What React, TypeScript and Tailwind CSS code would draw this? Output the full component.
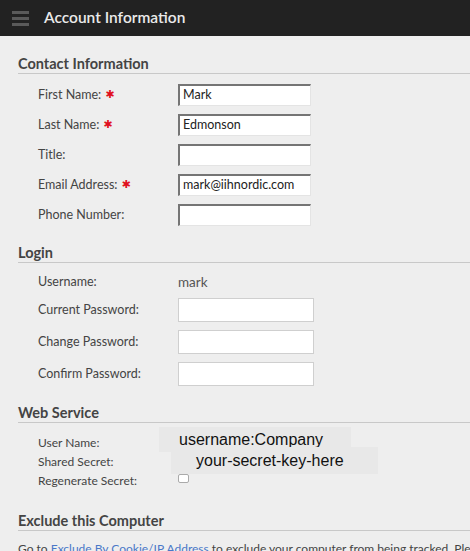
const font = { fontFamily: "Lato, 'Open Sans', sans-serif" };
const pasted = { fontFamily: "'Liberation Sans', Arial, sans-serif" };

function SectionHeader({ title }: { title: string }) {
  return (
    <div className="ml-[18px] border-b border-[#c8c8c8]">
      <h2 className="text-[14.5px] font-bold leading-[18px] text-[#444]">{title}</h2>
    </div>
  );
}

function Required() {
  return (
    <span
      className="relative top-[-1px] ml-[4px] text-[11px] leading-none text-[#e0101e]"
      style={{ fontFamily: "'DejaVu Sans', sans-serif" }}
    >
      ✱
    </span>
  );
}

function InsetInput({ value }: { value?: string }) {
  return (
    <div className="flex h-[22px] w-[133px] items-center border-t-2 border-l-2 border-b border-r border-t-[#757575] border-l-[#757575] border-b-[#e4e4e4] border-r-[#e4e4e4] bg-white px-[3px] text-[12.5px] text-[#222]">
      {value}
    </div>
  );
}

function PlainInput() {
  return <div className="h-[24px] w-[136px] border border-[#cfcfcf] bg-white" />;
}

const contactRows = [
  { label: "First Name:", required: true, value: "Mark" },
  { label: "Last Name:", required: true, value: "Edmonson" },
  { label: "Title:", required: false, value: "" },
  { label: "Email Address:", required: true, value: "mark@iihnordic.com" },
  { label: "Phone Number:", required: false, value: "" },
];

const passwordRows = ["Current Password:", "Change Password:", "Confirm Password:"];

export default function App() {
  return (
    <div className="min-h-[700px] w-[470px] overflow-hidden bg-[#eeeeee] text-[#444]" style={font}>
      {/* Top bar */}
      <div className="flex h-[36px] items-center bg-[#222222]">
        <div className="ml-[12px] flex w-[17px] flex-col gap-[3px]">
          <span className="h-[3px] bg-[#5a5a5a]" />
          <span className="h-[3px] bg-[#5a5a5a]" />
          <span className="h-[3px] bg-[#5a5a5a]" />
        </div>
        <h1 className="ml-[15px] text-[15.5px] font-semibold text-[#eaeaea]">Account Information</h1>
      </div>

      {/* Contact Information */}
      <div className="pt-[19px]">
        <SectionHeader title="Contact Information" />
        <div className="mt-[10px] flex flex-col gap-[8px]">
          {contactRows.map((row) => (
            <div key={row.label} className="flex h-[22px] items-center">
              <div className="flex w-[178px] items-center pl-[38px] text-[12.5px]">
                {row.label}
                {row.required && <Required />}
              </div>
              <InsetInput value={row.value} />
            </div>
          ))}
        </div>
      </div>

      {/* Login */}
      <div className="pt-[18px]">
        <SectionHeader title="Login" />
        <div className="mt-[10px] flex h-[18px] items-center text-[12.5px]">
          <div className="w-[178px] pl-[38px]">Username:</div>
          <div className="text-[13.5px] text-[#555]">mark</div>
        </div>
        <div className="mt-[7px] flex flex-col gap-[8px]">
          {passwordRows.map((label) => (
            <div key={label} className="flex items-center">
              <div className="w-[178px] pl-[38px] text-[12.5px]">{label}</div>
              <PlainInput />
            </div>
          ))}
        </div>
      </div>

      {/* Web Service */}
      <div className="pt-[18px]">
        <SectionHeader title="Web Service" />
        <div className="relative mt-[10px] flex flex-col text-[12px] leading-[19px]">
          <div className="w-[178px] pl-[38px]">User Name:</div>
          <div className="w-[178px] pl-[38px]">Shared Secret:</div>
          <div className="flex items-center">
            <div className="w-[178px] pl-[38px]">Regenerate Secret:</div>
            <span className="mt-[-4px] h-[9px] w-[11px] rounded-[2px] border border-[#aaa] bg-white" />
          </div>
          {/* pasted-over values */}
          <div
            className="absolute left-[159px] top-[-6px] flex h-[25px] w-[192px] items-center bg-[#e8e8e8] pl-[20px] text-[16px] text-[#111]"
            style={pasted}
          >
            username:Company
          </div>
          <div
            className="absolute left-[171px] top-[14px] flex h-[27px] w-[207px] items-center bg-[#e8e8e8] pl-[25px] text-[16px] text-[#111]"
            style={pasted}
          >
            your-secret-key-here
          </div>
        </div>
      </div>

      {/* Exclude this Computer */}
      <div className="pt-[22px]">
        <SectionHeader title="Exclude this Computer" />
        <p className="mt-[9px] whitespace-nowrap pl-[18px] text-[12px] leading-[18px]">
          Go to <a className="text-[#4a78c8]">Exclude By Cookie/IP Address</a> to exclude your computer from being tracked. Please note
        </p>
      </div>
    </div>
  );
}
